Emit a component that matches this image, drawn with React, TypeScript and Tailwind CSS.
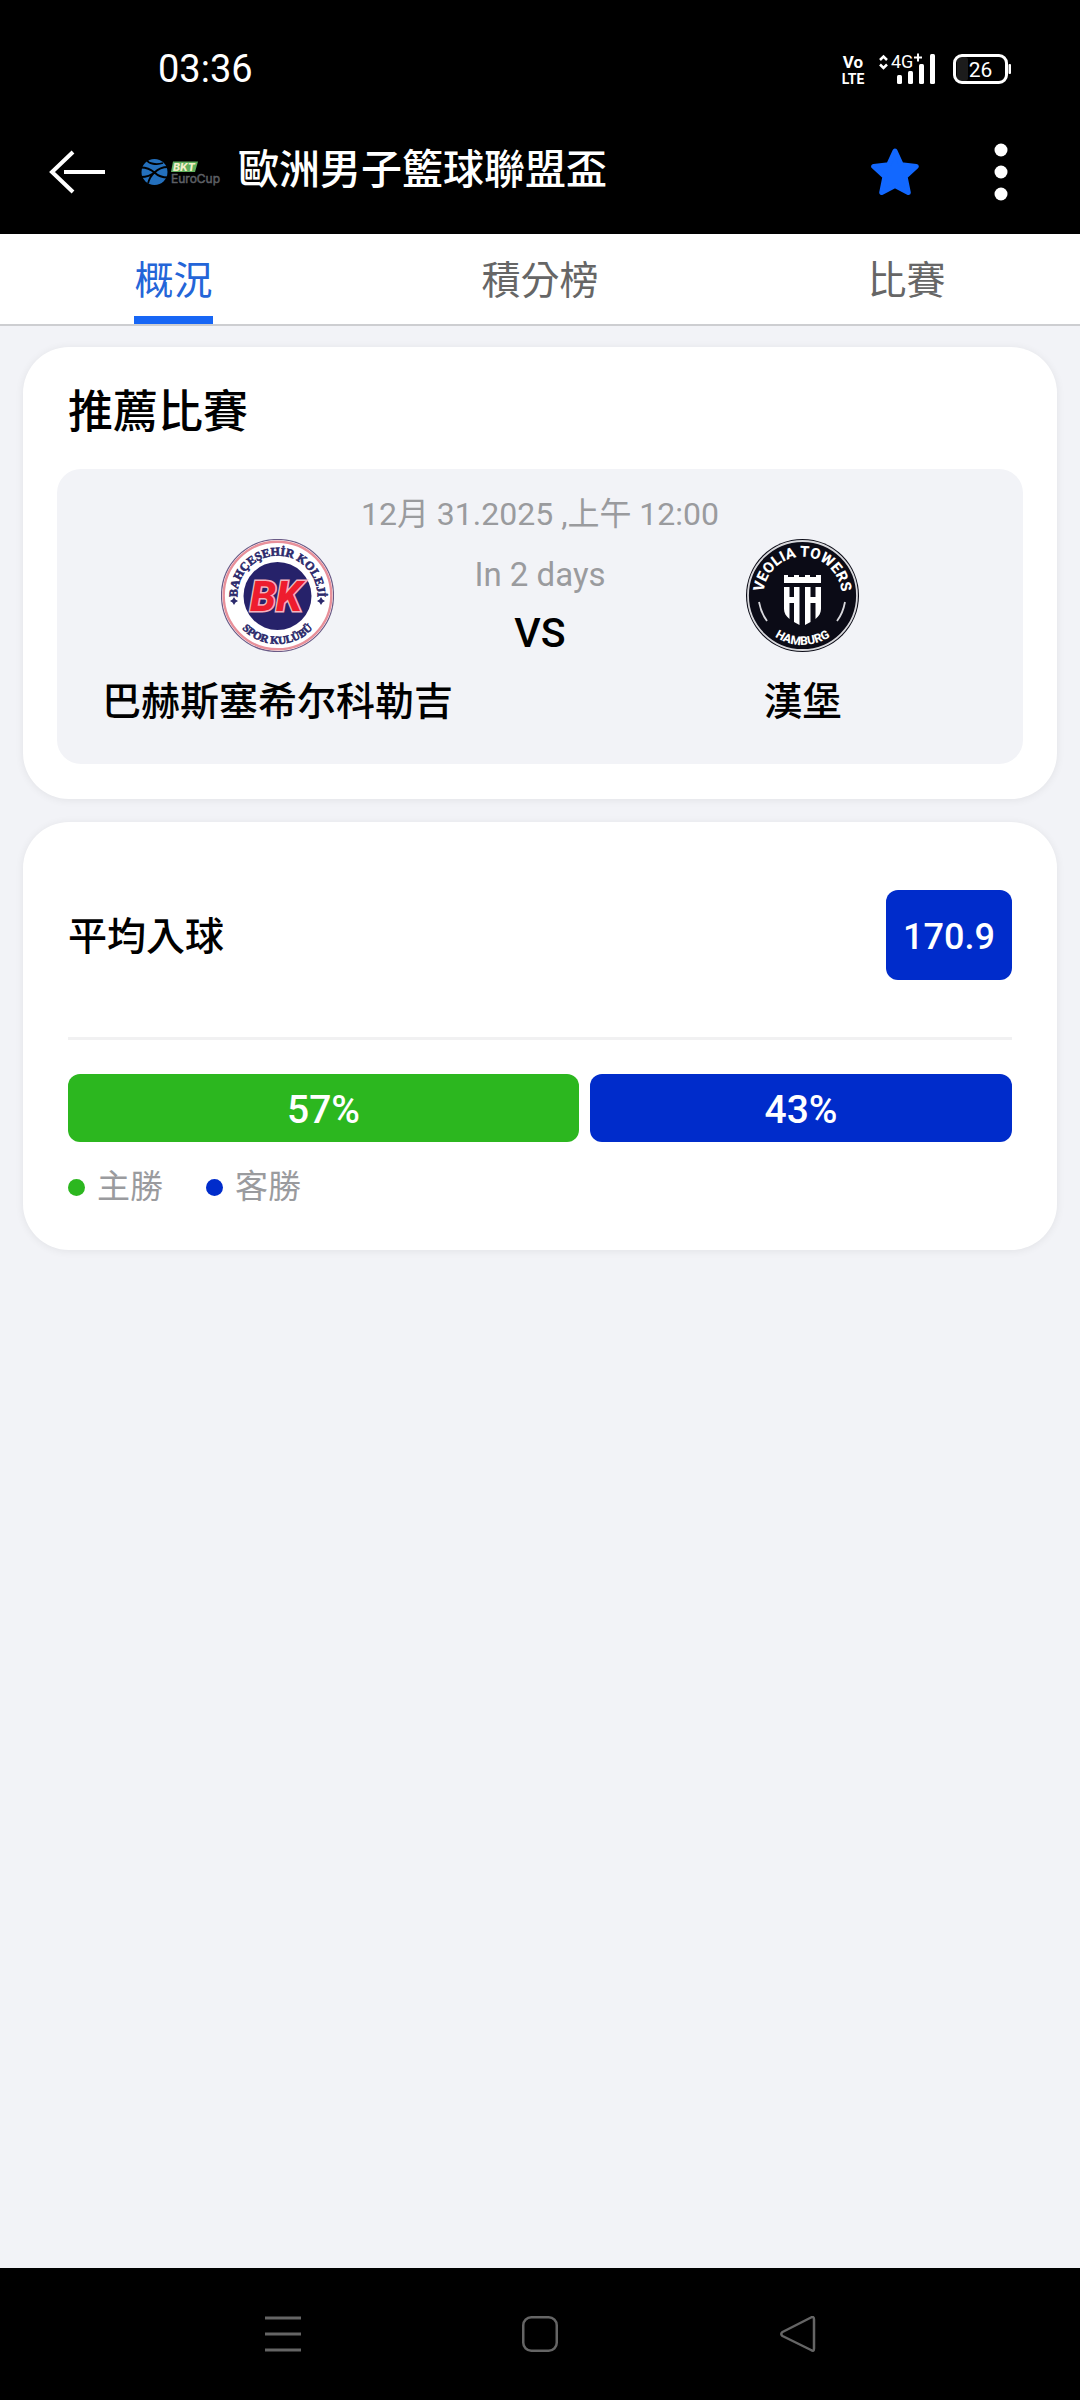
import React, { useState } from 'react';

const tabs = ['概況', '積分榜', '比賽'];

function StatusBar() {
  return (
    <div className="flex h-[110px] items-center justify-between pt-7 pl-[158px] pr-[68px]">
      <span className="text-[38px] leading-10">03:36</span>
      <svg className="h-9 w-[173px]" viewBox="839 51 173 36" fill="#fff" aria-hidden="true">
        <g fontFamily="'Liberation Sans Narrow', Roboto, sans-serif" fontWeight="700" textAnchor="middle">
          <text x="853" y="68" fontSize="17">Vo</text>
          <text x="853" y="84" fontSize="14">LTE</text>
        </g>
        <path d="M880 60l3.500-3.500 3.500 3.500M880 64.500l3.500 3.500 3.500-3.500" fill="none" stroke="#fff" strokeWidth="2.500" />
        <text x="891" y="68" fontSize="18" fontFamily="Roboto, sans-serif">4G</text>
        <path d="M914 57.500h8M918 53.500v8" stroke="#fff" strokeWidth="2" />
        <rect x="897" y="75" width="5" height="9" rx="1.500" />
        <rect x="908" y="71" width="5" height="13" rx="1.500" />
        <rect x="919" y="64" width="5" height="20" rx="1.500" />
        <rect x="930" y="54" width="5" height="30" rx="1.500" />
        <rect x="957" y="57" width="11" height="24" rx="3" fill="#1c1c1c" />
        <rect x="954.500" y="55.500" width="52" height="27" rx="7.500" fill="none" stroke="#fff" strokeWidth="3" />
        <rect x="1008.500" y="64" width="2.500" height="10" rx="1" />
        <text x="980.500" y="76.500" fontSize="21" textAnchor="middle" fontFamily="Roboto, sans-serif">26</text>
      </svg>
    </div>
  );
}

function EuroCupLogo() {
  return (
    <svg className="h-7 w-20 shrink-0" viewBox="0 0 80 28" role="img" aria-label="BKT EuroCup">
      <circle cx="13.500" cy="14" r="13" fill="#2470bd" />
      <path d="M0 9.500c7 0 10 2 13.500 5C17 11 21 9 27 9M0 19c6 0 10-1.500 13.500-4.500C17 18 21 19.500 27 19.500M6 2c1 4 10 5 16 3M7 25.500c1-4 3-8 6.500-11" fill="none" stroke="#000" strokeWidth="1.800" />
      <path d="M32 3.500h25l-3 10.500H30z" fill="#5fae5c" />
      <text x="32" y="12.500" fontSize="10.500" fontWeight="800" fontStyle="italic" fill="#f2f0c9" fontFamily="Inter, sans-serif">BKT</text>
      <text x="30" y="25" fontSize="12" fill="#5c5f64" stroke="#5c5f64" strokeWidth=".5" fontFamily="Inter, sans-serif">EuroCup</text>
    </svg>
  );
}

function AppBar() {
  return (
    <div className="flex h-[124px] items-center pl-12 pr-[65px]">
      <button type="button" aria-label="Back" className="mr-[33px] shrink-0">
        <svg className="h-12 w-[60px]" viewBox="0 0 60 48" fill="none" stroke="#fff" strokeWidth="4">
          <path d="M57 24H16M25 4L4 24l21 20" />
        </svg>
      </button>
      <EuroCupLogo />
      <h1 className="ml-[17px] grow pb-1 text-[41px] leading-[48px] font-medium">歐洲男子籃球聯盟盃</h1>
      <button type="button" aria-label="Favorite" className="mr-[68px] shrink-0">
        <svg className="h-12 w-12" viewBox="0 0 48 48" fill="#1268ff" stroke="#1268ff" strokeWidth="5" strokeLinejoin="round">
          <path d="M24 3l6.300 13.800 15 1.700-11.200 10.200 3.200 15.800L24 37.500 10.700 44.500l3.200-15.800L2.700 18.500l15-1.700z" />
        </svg>
      </button>
      <button type="button" aria-label="More" className="shrink-0">
        <svg className="h-[58px] w-7" viewBox="0 0 28 58" fill="#fff">
          <circle cx="14" cy="7" r="6.500" />
          <circle cx="14" cy="29" r="6.500" />
          <circle cx="14" cy="51" r="6.500" />
        </svg>
      </button>
    </div>
  );
}

function BahcesehirCrest() {
  return (
    <svg className="size-[113px]" viewBox="0 0 113 113" role="img" aria-label="Bahçeşehir Koleji">
      <defs>
        <path id="bk-top" d="M17 63a40 40 0 1 1 79 0" />
        <path id="bk-bottom" d="M8 56.500a48.500 48.500 0 0 0 97 0" />
      </defs>
      <circle cx="56.500" cy="56.500" r="56" fill="#fff" stroke="#6a5a86" strokeWidth="1.200" />
      <circle cx="56.500" cy="56.500" r="53.800" fill="none" stroke="#e8909a" strokeWidth="2.400" />
      <circle cx="56.500" cy="57" r="34" fill="#26226a" />
      <g fill="#2c2a6c" fontFamily="'Liberation Serif', serif" fontWeight="700" textAnchor="middle" stroke="#2c2a6c" strokeWidth=".6">
        <text fontSize="12"><textPath href="#bk-top" startOffset="50%">BAHÇEŞEHİR KOLEJİ</textPath></text>
        <text fontSize="11"><textPath href="#bk-bottom" startOffset="50%">SPOR KULÜBÜ</textPath></text>
      </g>
      <path d="M13 58l1.500 2.500 2.500 1.500-2.500 1.500L13 66l-1.500-2.500L9 62l2.500-1.500zM100 58l1.500 2.500 2.500 1.500-2.500 1.500-1.500 2.500-1.500-2.500L96 62l2.500-1.500z" fill="#2c2a6c" />
      <text x="55" y="72" textAnchor="middle" fontSize="42" fontWeight="800" fontStyle="italic" fontFamily="'Liberation Sans Narrow', Roboto, sans-serif" fill="#ee1c2e" stroke="#f3b3bf" strokeWidth="3" paintOrder="stroke">BK</text>
    </svg>
  );
}

function HamburgCrest() {
  return (
    <svg className="size-[113px]" viewBox="0 0 113 113" role="img" aria-label="Veolia Towers Hamburg">
      <defs>
        <path id="vt-top" d="M18 63a39 39 0 1 1 77 0" />
        <path id="vt-bottom" d="M7 56.500a49.500 49.500 0 0 0 99 0" />
      </defs>
      <circle cx="56.500" cy="56.500" r="56.500" fill="#0b0b16" />
      <circle cx="56.500" cy="56.500" r="54.500" fill="none" stroke="#d8d8dc" strokeWidth="1.800" />
      <g fill="#fff" fontFamily="Roboto, sans-serif" fontWeight="800" textAnchor="middle">
        <text fontSize="15"><textPath href="#vt-top" startOffset="50%">VEOLIA TOWERS</textPath></text>
        <text fontSize="12"><textPath href="#vt-bottom" startOffset="50%">HAMBURG</textPath></text>
      </g>
      <path d="M13 63q2 11 8 19M99 63q-2 11-8 19" stroke="#d8d8dc" strokeWidth="1.800" fill="none" />
      <path
        d="M38 36h4v2h6v-2h5v2h6v-2h5v2h6v-2h5v8H38zM38 48h5.500v10h4.500V48h5.500v38l-5.500-3V64h-4.500v16C40 77 38 74 38 70zM59 48h5.500v10h5V48H75v22c0 4-2 7-5.500 10V64h-5v19L59 86z"
        fill="#fff"
      />
    </svg>
  );
}

function Team({ name, crest }: { name: string; crest: React.ReactNode }) {
  return (
    <div className="flex flex-col items-center">
      {crest}
      <span className="mt-[22px] text-[39px] leading-[56px] font-medium whitespace-nowrap">{name}</span>
    </div>
  );
}

function FeaturedMatch() {
  return (
    <section className="rounded-[46px] bg-white px-[34px] pt-9 pb-[35px] shadow-[0_1px_8px_rgba(0,0,0,0.07)]">
      <h2 className="mb-[26px] px-[11px] text-[45px] leading-[60px] font-medium">推薦比賽</h2>
      <div className="rounded-3xl bg-[#f2f3f7] px-6 pt-5 pb-[34px]">
        <p className="text-center text-[32px] leading-[50px] text-[#9a9b9e]">12月 31.2025 ,上午 12:00</p>
        <div className="grid grid-cols-[1fr_132px_1fr]">
          <Team name="巴赫斯塞希尔科勒吉" crest={<BahcesehirCrest />} />
          <div className="flex flex-col items-center pt-4">
            <span className="text-[33px] leading-10 whitespace-nowrap text-[#9a9b9e]">In 2 days</span>
            <span className="mt-2 text-[41px] leading-[60px] font-medium">VS</span>
          </div>
          <Team name="漢堡" crest={<HamburgCrest />} />
        </div>
      </div>
    </section>
  );
}

function SeasonStats() {
  const results = [
    { label: '主勝', value: 57, color: 'bg-[#2cb71f]' },
    { label: '客勝', value: 43, color: 'bg-[#002ccb]' },
  ];

  return (
    <section className="rounded-[46px] bg-white px-[45px] pt-[68px] pb-[38px] shadow-[0_1px_8px_rgba(0,0,0,0.07)]">
      <div className="flex items-center justify-between border-b-[3px] border-[#f1f1f2] pb-[57px]">
        <h2 className="pt-1 text-[39px] leading-[56px] font-medium">平均入球</h2>
        <span className="flex h-[90px] w-[126px] items-center justify-center rounded-xl bg-[#002ccb] pt-1 text-[36px] font-medium text-white">
          170.9
        </span>
      </div>
      <div className="mt-[34px] flex gap-[11px]">
        {results.map((r) => (
          <div
            key={r.label}
            className={`flex h-[68px] basis-[148px] items-center justify-center rounded-xl pt-1 text-[39px] font-medium text-white ${r.color}`}
            style={{ flexGrow: r.value }}
          >
            {r.value}%
          </div>
        ))}
      </div>
      <ul className="mt-5 flex gap-[43px]">
        {results.map((r) => (
          <li key={r.label} className="flex items-center gap-3 text-[33px] leading-[50px] text-[#9a9b9e]">
            <span className={`size-[17px] rounded-full ${r.color}`} />
            {r.label}
          </li>
        ))}
      </ul>
    </section>
  );
}

function SystemNav() {
  return (
    <nav className="grid h-[132px] grid-cols-[1fr_154px_1fr] items-center bg-black px-[102px]">
      <button type="button" aria-label="Recents" className="justify-self-center">
        <svg className="size-9" viewBox="0 0 36 36" stroke="#656565" strokeWidth="3">
          <path d="M0 2h36M0 18h36M0 34h36" />
        </svg>
      </button>
      <button type="button" aria-label="Home" className="justify-self-center">
        <svg className="size-9" viewBox="0 0 36 36" fill="none" stroke="#656565" strokeWidth="2.500">
          <rect x="1.250" y="1.250" width="33.500" height="33.500" rx="8" />
        </svg>
      </button>
      <button type="button" aria-label="Back" className="justify-self-center">
        <svg className="size-9" viewBox="0 0 36 36" fill="none" stroke="#656565" strokeWidth="2.500" strokeLinejoin="round">
          <path d="M31 1.500Q34 0 34 3.500v29q0 3.500-3 1.500L2.500 20q-2.500-2 0-4z" />
        </svg>
      </button>
    </nav>
  );
}

export default function App() {
  const [active, setActive] = useState(tabs[0]);

  return (
    <div className="flex min-h-screen flex-col bg-[#f2f3f7] font-[Roboto,'Noto_Sans_CJK_TC',sans-serif] text-black">
      <header className="bg-black text-white">
        <StatusBar />
        <AppBar />
      </header>

      <div role="tablist" className="flex h-[92px] justify-around border-b-2 border-[#cdced1] bg-white">
        {tabs.map((tab) => (
          <button
            key={tab}
            type="button"
            role="tab"
            aria-selected={tab === active}
            onClick={() => setActive(tab)}
            className={`border-b-8 pt-3 text-[39px] leading-10 ${
              tab === active ? 'border-[#1766f5] text-[#2465d8]' : 'border-transparent text-[#666]'
            }`}
          >
            {tab}
          </button>
        ))}
      </div>

      <main className="flex grow flex-col gap-[23px] px-[23px] pt-[21px]">
        <FeaturedMatch />
        <SeasonStats />
      </main>

      <SystemNav />
    </div>
  );
}
